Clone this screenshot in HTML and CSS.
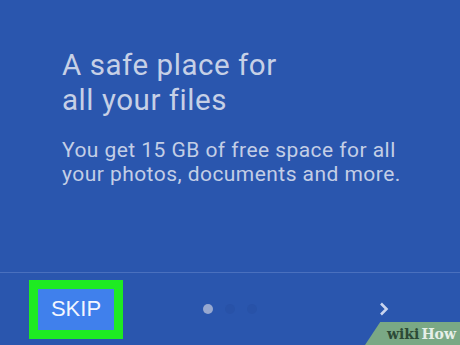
FILE: index.html
```html
<!DOCTYPE html>
<html lang="en">

<head>
  <meta charset="UTF-8" />
  <title>Welcome</title>
  <meta name="viewport" content="width=device-width, initial-scale=1.0">
  <link rel="stylesheet" href="styles.css">
</head>

<body>

  <!-- Intro slide -->
  <div class="slide">
    <h1 class="title">A safe place for<br>all your files</h1>
    <p class="text">You get 15 GB of free space for all<br>your photos, documents and more.</p>
  </div>

  <!-- Bottom bar -->
  <div class="footer">
    <div class="skip-wrap">
      <button class="skip">SKIP</button>
    </div>
    <div class="dots">
      <span class="dot active"></span>
      <span class="dot"></span>
      <span class="dot"></span>
    </div>
    <div class="next-wrap">
      <svg class="next" width="10" height="14" viewBox="0 0 10 14">
        <path d="M2 1.5 L7.5 7 L2 12.5" fill="none" stroke="#c9d4ee" stroke-width="2.6" />
      </svg>
    </div>
  </div>

  <div class="watermark"><span class="wiki">wiki</span><span class="how">How</span></div>

</body>

</html>
```

FILE: styles.css
```css
* {
  margin: 0;
  padding: 0;
  box-sizing: border-box;
}

body {
  width: 460px;
  height: 345px;
  background: #2a56ae;
  font-family: Roboto, 'Noto Sans', sans-serif;
  display: flex;
  flex-direction: column;
  overflow: hidden;
  position: relative;
}

/* === Slide === */
.slide {
  flex: 1;
  padding: 48px 0 0 62px;
}

.title {
  color: #c6d0e6;
  font-size: 29.5px;
  font-weight: 400;
  line-height: 35px;
  letter-spacing: 0.55px;
}

.text {
  color: #c3cee6;
  font-size: 21px;
  line-height: 24px;
  letter-spacing: 0.45px;
  margin-top: 20px;
}

/* === Footer === */
.footer {
  height: 73px;
  border-top: 1px solid #4a70be;
  display: grid;
  grid-template-columns: 1fr auto 1fr;
  align-items: center;
}

.skip-wrap {
  padding-left: 29px;
}

.skip {
  display: block;
  border: 9px solid #1eeb22;
  background: #4080ec;
  color: #f2f6ff;
  font-family: 'Liberation Sans', Arial, sans-serif;
  font-size: 22px;
  width: 94px;
  height: 59px;
  line-height: 40px;
  text-align: center;
}

.dots {
  display: flex;
  gap: 12px;
  align-items: center;
}

.dot {
  width: 10px;
  height: 10px;
  border-radius: 50%;
  background: #2852a8;
}

.dot.active {
  background: #97a8d0;
}

.next-wrap {
  display: flex;
  justify-content: flex-end;
  padding-right: 71px;
}

/* === Watermark === */
.watermark {
  position: absolute;
  right: 0;
  bottom: 0;
  width: 95px;
  height: 23px;
  background: #7aa885;
  clip-path: polygon(16% 0, 100% 0, 100% 100%, 0 100%);
  font-family: 'DejaVu Serif', serif;
  font-weight: bold;
  font-size: 14px;
  line-height: 20px;
  text-align: right;
  padding: 2px 4px 0 0;
}

.wiki {
  color: #2c4a36;
}

.how {
  color: #e6efe8;
  margin-left: 2px;
}
```
